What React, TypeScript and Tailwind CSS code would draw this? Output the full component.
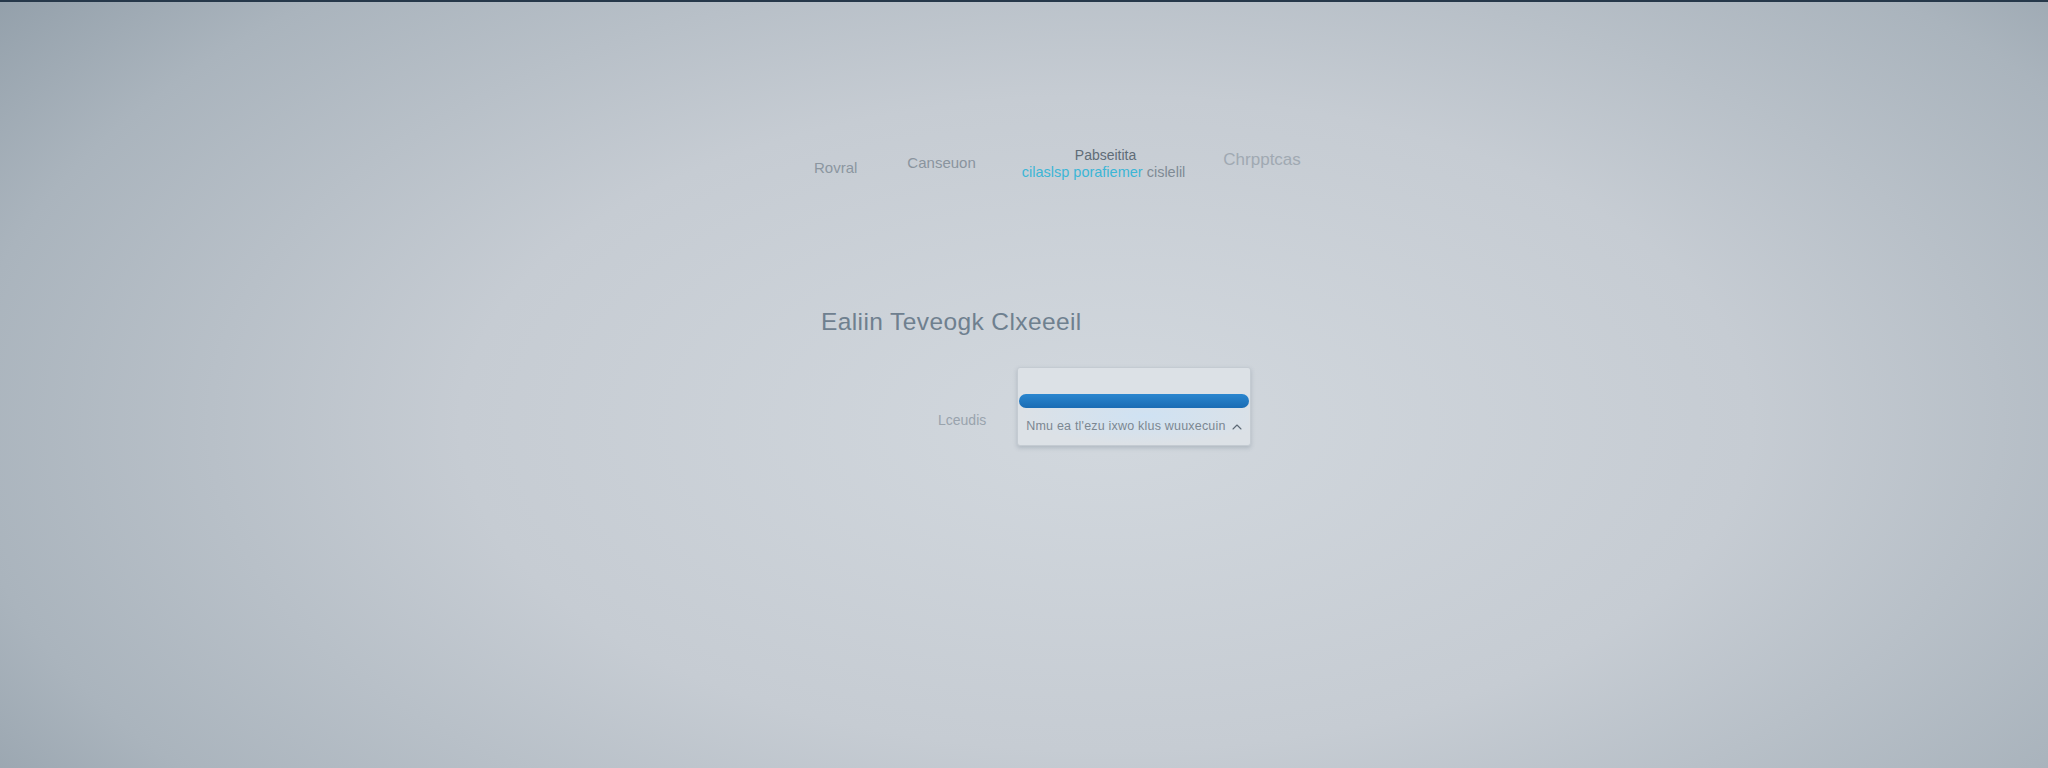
import { ChevronUp } from "lucide-react";

const font = { fontFamily: '"Liberation Sans", Arial, sans-serif' };

function NavBar() {
  return (
    <nav className="flex items-start leading-none">
      <span className="mt-[12px] text-[15px] text-[#8b96a0]">Rovral</span>
      <span className="ml-[50px] mt-[7px] text-[15px] text-[#8a949e]">Canseuon</span>
      <div className="ml-[46px] flex flex-col items-center">
        <span className="ml-[4px] text-[14px] text-[#5f6c77]">Pabseitita</span>
        <span className="mt-[3px] whitespace-nowrap text-[14.5px]">
          <span className="text-[#3cb6d6]">cilaslsp porafiemer</span>{" "}
          <span className="text-[#7f8a94]">cislelil</span>
        </span>
      </div>
      <span className="ml-[38px] mt-[3px] text-[17px] text-[#a0a9b2]">Chrpptcas</span>
    </nav>
  );
}

function Card() {
  return (
    <div className="flex h-[79px] w-[234px] flex-col rounded-[3px] border border-[#c4cbd2] bg-[#dce1e6] px-[1px] pt-[26px] shadow-[0_2px_4px_rgba(80,95,110,0.25)]">
      <div className="h-[14px] w-full rounded-full bg-[linear-gradient(180deg,#2a86cf,#1a6cb4)]" />
      <div className="flex flex-1 items-center gap-[3px] bg-[radial-gradient(ellipse_at_55%_20%,#cfe2f3,transparent_70%)] pl-[7px] pr-[5px]">
        <span className="flex-1 whitespace-nowrap text-[12.5px] tracking-[0.2px] text-[#7b8792]">
          Nmu ea tl&apos;ezu ixwo klus wuuxecuin
        </span>
        <ChevronUp className="size-[16px] shrink-0 text-[#5c6975]" strokeWidth={1.6} />
      </div>
    </div>
  );
}

export default function App() {
  return (
    <div
      style={font}
      className="relative h-[768px] w-[2048px] overflow-hidden border-t-2 border-[#26384a] bg-[radial-gradient(ellipse_70%_95%_at_54%_55%,#d2d8de_0%,#c6ccd3_45%,#aab4bd_80%,#8f9ca7_100%)]"
    >
      <div className="flex flex-col pl-[814px] pt-[146px]">
        <NavBar />
        <h1 className="ml-[7px] mt-[130px] text-[24.5px] font-light leading-none tracking-[0.4px] text-[#6f808f]">
          Ealiin Teveogk Clxeeeil
        </h1>
        <div className="ml-[124px] mt-[33px] flex items-center gap-[31px]">
          <span className="mt-[28px] text-[14px] text-[#99a3ad]">Lceudis</span>
          <Card />
        </div>
      </div>
    </div>
  );
}
